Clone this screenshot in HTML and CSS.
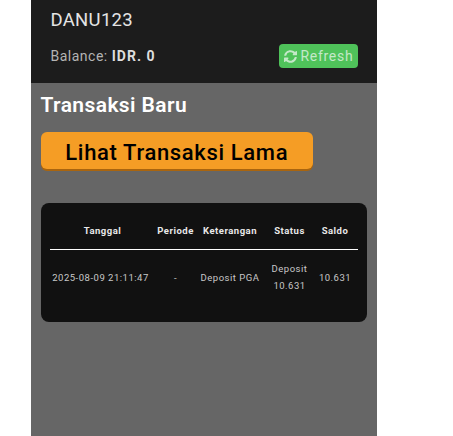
FILE: index.html
```html
<!DOCTYPE html>
<html lang="id">
<head>
  <meta charset="UTF-8">
  <title>Transaksi Baru</title>
  <link rel="stylesheet" href="styles.css">
</head>
<body>
  <div class="panel">
    <div class="header">
      <div class="username">DANU123</div>
      <div class="balance-row">
        <div class="balance">Balance: <b>IDR. 0</b></div>
        <a class="refresh">
          <svg class="refresh-icon" viewBox="0 0 512 512"><path fill="currentColor" d="M370.700 133.300A168 168 0 0 0 89.600 213.600a12 12 0 0 1-11.700 10.400H20.700a12 12 0 0 1-11.800-14.200C30.600 96.100 130.300 8 256 8c68.800 0 131.300 28.100 176.200 73.100L468.700 44.700c15.100-15.100 43.300-4.400 43.300 17V184a24 24 0 0 1-24 24H365.700c-21.400 0-32.100-25.900-17-41l22-33.700zM32 296h122.300c21.400 0 32.100 25.900 17 41l-30 33.700a168 168 0 0 0 281.100-80.300 12 12 0 0 1 11.700-10.400h57.200a12 12 0 0 1 11.800 14.200C481.400 407.900 381.700 504 256 504c-68.800 0-131.300-28.100-176.200-73.100L43.300 467.300C28.200 482.400 0 471.700 0 450.300V320a24 24 0 0 1 32-24z"/></svg>
          Refresh
        </a>
      </div>
    </div>
    <div class="content">
      <h2 class="title">Transaksi Baru</h2>
      <a class="old-btn">Lihat Transaksi Lama</a>
      <div class="table-card">
        <table class="trx-table">
          <colgroup>
            <col class="col-date">
            <col class="col-period">
            <col class="col-desc">
            <col class="col-status">
            <col class="col-saldo">
          </colgroup>
          <thead>
            <tr>
              <th>Tanggal</th>
              <th>Periode</th>
              <th>Keterangan</th>
              <th>Status</th>
              <th>Saldo</th>
            </tr>
          </thead>
          <tbody>
            <tr>
              <td>2025-08-09 21:11:47</td>
              <td>-</td>
              <td>Deposit PGA</td>
              <td>Deposit<br>10.631</td>
              <td>10.631</td>
            </tr>
          </tbody>
        </table>
      </div>
    </div>
  </div>
</body>
</html>
```

FILE: styles.css
```css
html, body {
  height: 100%;
}
body {
  margin: 0;
  background: #fff;
  font-family: Roboto, sans-serif;
  overflow: hidden;
}
.panel {
  width: 346px;
  height: 100%;
  margin-left: 31px;
  background: #666;
}
.header {
  height: 83px;
  box-sizing: border-box;
  padding: 9px 19px 0 19.500px;
  background: #1c1c1c;
}
.username {
  font-size: 18.500px;
  line-height: 22px;
  color: #e4e4e4;
  letter-spacing: 0.300px;
}
.balance-row {
  display: flex;
  justify-content: space-between;
  align-items: center;
  margin-top: 13px;
}
.balance {
  font-size: 14px;
  color: #b4b4b4;
  letter-spacing: 0.500px;
}
.balance b {
  color: #ddd;
  letter-spacing: 1px;
}
.refresh {
  display: flex;
  align-items: center;
  gap: 4px;
  width: 79.500px;
  height: 24px;
  box-sizing: border-box;
  padding-left: 5px;
  background: #4fc25a;
  border-radius: 4px;
  color: #c4e8c8;
  font-size: 14px;
  letter-spacing: 0.700px;
}
.refresh-icon {
  width: 13px;
  height: 13px;
}
.content {
  padding: 9px 9.500px 0;
}
.title {
  margin: 0;
  font-size: 21px;
  line-height: 27px;
  font-weight: 600;
  letter-spacing: 0.400px;
  color: #fff;
}
.old-btn {
  display: block;
  width: 272.500px;
  height: 37px;
  margin-top: 13px;
  background: #f59d25;
  border-radius: 6px;
  box-shadow: 0 2px 0 #a9650f;
  font-size: 22px;
  line-height: 42px;
  font-weight: 500;
  letter-spacing: 0.650px;
  text-align: center;
  color: #000;
}
.table-card {
  width: 326.500px;
  height: 119px;
  box-sizing: border-box;
  margin-top: 34px;
  padding: 9px 9px;
  background: #111;
  border-radius: 8px;
}
.trx-table {
  width: 308px;
  table-layout: fixed;
  border-collapse: collapse;
  font-size: 9.500px;
  letter-spacing: 0.500px;
  color: #c8c8c8;
}
.col-date { width: 102px; }
.col-period { width: 48px; }
.col-desc { width: 61px; }
.col-status { width: 58px; }
.col-saldo { width: 39px; }
.trx-table th {
  height: 37px;
  padding: 0;
  color: #e8e8e8;
  font-weight: 700;
  border-bottom: 1px solid #fff;
  white-space: nowrap;
}
.trx-table th:first-child {
  padding-left: 4px;
}
.trx-table th:last-child,
.trx-table td:last-child {
  padding-right: 6px;
}
.trx-table td {
  height: 54px;
  padding: 0;
  line-height: 17px;
  text-align: center;
  white-space: nowrap;
}
```
